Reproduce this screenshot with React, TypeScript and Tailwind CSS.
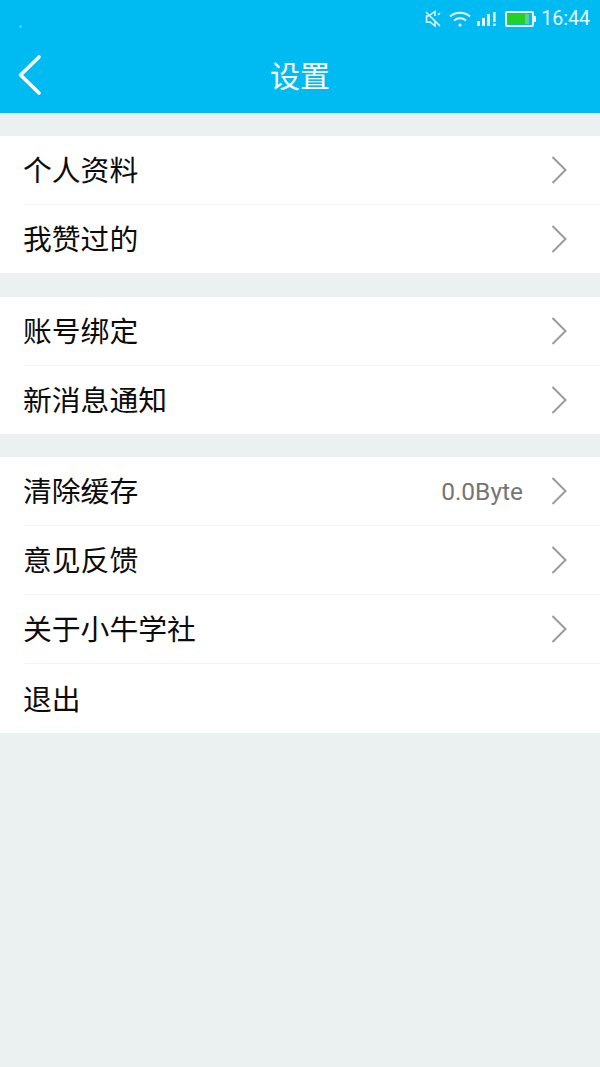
import React from 'react'

const cjk = "font-['Roboto','Noto_Sans_CJK_SC',sans-serif]"

interface RowProps {
  label: string
  value?: string
  arrow?: boolean
  last?: boolean
  short?: boolean
}

const Chevron = () => (
  <svg width="18" height="30" viewBox="0 0 18 30" fill="none" className="shrink-0">
    <path d="M2.5 2 L15.5 15 L2.5 28" stroke="#9a9a9a" strokeWidth="2" />
  </svg>
)

const Row: React.FC<RowProps> = ({ label, value, arrow = true, last = false, short = false }) => (
  <div className="pl-6">
    <div className={`${short ? 'h-[68px]' : 'h-[69px]'} flex items-center pr-[32px] border-[#f3f3f3] ${last ? '' : 'border-b'}`}>
      <span className="flex-1 pt-[3px] text-[28.8px] leading-none text-[#0c0c0c] -ml-px">{label}</span>
      {value && <span className="pt-[3px] text-[24.5px] leading-none text-[#757575] mr-[27px]">{value}</span>}
      {arrow && <Chevron />}
    </div>
  </div>
)

const StatusBar = () => (
  <div className="h-[38px] flex items-center pl-[19px] pr-[10px] text-white">
    {/* faint notification dot on the left */}
    <div className="w-[3px] h-[3px] mt-[14px] rounded-full bg-white/30 mr-auto" />
    {/* mute */}
    <svg width="18" height="18" viewBox="0 0 18 18" fill="none" stroke="#e6f8fe" strokeWidth="1.5" className="mr-[7px]">
      <path d="M2 2 L16 16" />
      <path d="M6 5 L11 1.5 V6 M11 11 V16 L6 12 H2.5 V6 H5" />
      <path d="M14 5 L16 3" />
    </svg>
    {/* wifi */}
    <svg width="22" height="18" viewBox="0 0 22 18" fill="none" stroke="#e6f8fe" strokeWidth="1.8" className="mr-[6px]">
      <path d="M1 6.5 C6.5 1.5 15.5 1.5 21 6.5" />
      <path d="M5 10.5 C8.5 7.5 13.5 7.5 17 10.5" />
      <circle cx="11" cy="15" r="1.6" fill="#e6f8fe" stroke="none" />
    </svg>
    {/* signal */}
    <svg width="20" height="16" viewBox="0 0 20 16" fill="#e6f8fe" className="mr-[8px]">
      <rect x="0" y="10" width="3" height="5" />
      <rect x="5" y="7" width="3" height="8" />
      <rect x="10" y="3" width="3" height="12" />
      <rect x="16" y="1" width="2.6" height="10" />
      <rect x="16" y="12.5" width="2.6" height="2.5" />
    </svg>
    {/* battery */}
    <div className="flex items-center mr-[5px]">
      <div className="w-[29px] h-[16px] border-2 border-[#e6f8fe] rounded-[2px] p-[1px] flex">
        <div className="w-[17px] h-full bg-[#22d21e]" />
        <div className="w-[4px] h-full bg-[#5fc9a8]" />
      </div>
      <div className="w-[2px] h-[6px] bg-[#e6f8fe]" />
    </div>
    <span className="font-['Roboto',sans-serif] text-[19.6px] leading-none text-[#e6f8fe]">16:44</span>
  </div>
)

export default function App() {
  return (
    <div className={`${cjk} w-[600px] h-[1067px] bg-[#ebf1f1] overflow-hidden`}>
      <header className="h-[113px] bg-[#00bbf2]">
        <StatusBar />
        <div className="relative h-[75px] flex items-center justify-center">
          <svg width="26" height="42" viewBox="0 0 26 42" fill="none" className="absolute left-[17px] top-[16px]">
            <path d="M22 3 L3.5 21 L22 39" stroke="#fff" strokeWidth="3.6" strokeLinecap="round" strokeLinejoin="round" />
          </svg>
          <h1 className="pt-[2px] text-[30px] leading-none font-normal text-white">设置</h1>
        </div>
      </header>

      <section className="mt-[23px] bg-white">
        <Row label="个人资料" />
        <Row label="我赞过的" last short />
      </section>

      <section className="mt-[24px] bg-white">
        <Row label="账号绑定" />
        <Row label="新消息通知" last short />
      </section>

      <section className="mt-[23px] bg-white">
        <Row label="清除缓存" value="0.0Byte" />
        <Row label="意见反馈" />
        <Row label="关于小牛学社" />
        <Row label="退出" arrow={false} last />
      </section>
    </div>
  )
}
